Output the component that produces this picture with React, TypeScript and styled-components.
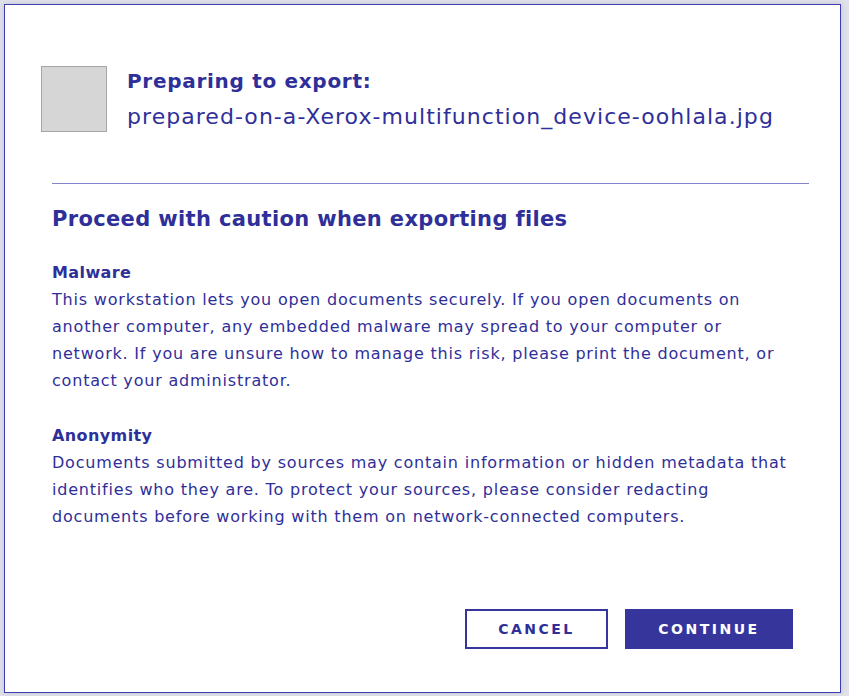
import React from "react";
import styled, { createGlobalStyle } from "styled-components";

const GlobalStyle = createGlobalStyle`
  html, body {
    margin: 0;
    padding: 0;
    background: #e1e1ea;
  }
  * {
    box-sizing: border-box;
  }
`;

const ink = "#2f2f99";

const Page = styled.div`
  width: 849px;
  height: 696px;
  padding: 4px 0 0 4px;
  font-family: "DejaVu Sans", "Noto Sans", sans-serif;
  color: ${ink};
`;

const Dialog = styled.div`
  width: 837px;
  height: 689px;
  background: #ffffff;
  border: 1px solid #3d3db0;
  box-shadow: 0 0 6px rgba(60, 60, 120, 0.18);
  display: flex;
  flex-direction: column;
`;

const Header = styled.div`
  display: flex;
  align-items: flex-start;
  gap: 20px;
  padding: 61px 0 0 36px;
`;

const Thumb = styled.div`
  width: 66px;
  height: 66px;
  flex-shrink: 0;
  background: #d6d6d6;
  border: 1px solid #a6a6a6;
`;

const HeaderText = styled.div`
  display: flex;
  flex-direction: column;
  padding-top: 1px;
`;

const Title = styled.div`
  font-size: 20px;
  font-weight: 700;
  letter-spacing: 0.7px;
  line-height: 28px;
  margin-bottom: 7px;
`;

const FileName = styled.div`
  font-size: 22px;
  letter-spacing: 1.05px;
  line-height: 30px;
  white-space: nowrap;
`;

const Divider = styled.hr`
  width: 757px;
  margin: 51px 0 0 47px;
  border: none;
  border-top: 1px solid #8484cc;
`;

const Body = styled.div`
  padding: 20px 47px 0 47px;
`;

const Heading = styled.h2`
  margin: 0 0 25px 0;
  font-size: 21px;
  font-weight: 700;
  letter-spacing: 0.35px;
  line-height: 30px;
`;

const Section = styled.div`
  font-size: 16px;
  letter-spacing: 0.8px;
  line-height: 27px;
  white-space: nowrap;
  & + & {
    margin-top: 28px;
  }
`;

const SectionTitle = styled.div`
  font-weight: 700;
  letter-spacing: 0.4px;
`;

const Actions = styled.div`
  margin-top: auto;
  display: flex;
  justify-content: flex-end;
  gap: 17px;
  padding: 0 47px 43px 0;
`;

const Button = styled.button<{ $primary?: boolean }>`
  height: 40px;
  width: ${(p) => (p.$primary ? "168px" : "143px")};
  font-family: inherit;
  font-size: 14px;
  font-weight: 700;
  letter-spacing: 2.5px;
  cursor: pointer;
  color: ${(p) => (p.$primary ? "#ffffff" : ink)};
  background: ${(p) => (p.$primary ? "#35359b" : "#ffffff")};
  border: 2px solid #35359b;
`;

const App = () => {
  return (
    <>
      <GlobalStyle />
      <Page>
        <Dialog>
          <Header>
            <Thumb />
            <HeaderText>
              <Title>Preparing to export:</Title>
              <FileName>prepared-on-a-Xerox-multifunction_device-oohlala.jpg</FileName>
            </HeaderText>
          </Header>
          <Divider />
          <Body>
            <Heading>Proceed with caution when exporting files</Heading>
            <Section>
              <SectionTitle>Malware</SectionTitle>
              This workstation lets you open documents securely. If you open documents on
              <br />
              another computer, any embedded malware may spread to your computer or
              <br />
              network. If you are unsure how to manage this risk, please print the document, or
              <br />
              contact your administrator.
            </Section>
            <Section>
              <SectionTitle>Anonymity</SectionTitle>
              Documents submitted by sources may contain information or hidden metadata that
              <br />
              identifies who they are. To protect your sources, please consider redacting
              <br />
              documents before working with them on network-connected computers.
            </Section>
          </Body>
          <Actions>
            <Button>CANCEL</Button>
            <Button $primary>CONTINUE</Button>
          </Actions>
        </Dialog>
      </Page>
    </>
  );
};

export default App;
